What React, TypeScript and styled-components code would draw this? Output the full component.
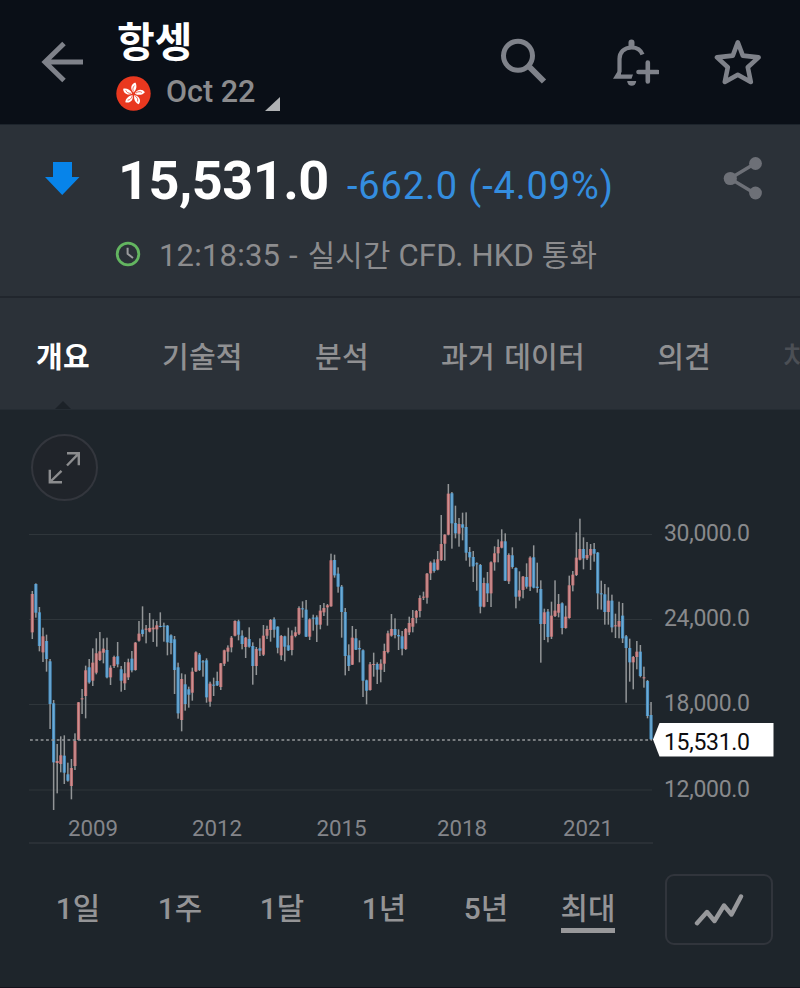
import React from 'react';
import styled, { createGlobalStyle, css } from 'styled-components';

const GlobalStyle = createGlobalStyle`
  * { box-sizing: border-box; }
  body {
    margin: 0;
    background: #1e252b;
    font-family: Roboto, 'Noto Sans CJK KR', sans-serif;
  }
`;

const Screen = styled.div`
  width: 800px;
  height: 988px;
  display: flex;
  flex-direction: column;
  overflow: hidden;
  background: #1e252b;
  border-bottom: 1px solid #14121b;
`;

const Header = styled.header`
  height: 125px;
  flex: none;
  display: flex;
  background: #0a0f17;
  border-bottom: 1px solid #1d242c;
  padding-left: 41px;
`;

const BackIcon = styled.svg`
  width: 43px;
  height: 42px;
  margin-top: 41px;
  flex: none;
`;

const TitleBlock = styled.div`
  margin-left: 32px;
  width: 384px;
  padding-top: 15px;
`;

const Title = styled.h1`
  margin: 0 0 0 1px;
  font-size: 41px;
  line-height: 56px;
  height: 54px;
  font-weight: 700;
  color: #fff;
`;

const Contract = styled.div`
  display: flex;
  height: 45px;
  align-items: center;
  margin-top: 1px;
`;

const Flag = styled.svg`
  width: 35px;
  height: 35px;
  flex: none;
  margin: 2px 15px 0 0;
`;

const Month = styled.span`
  font-size: 30.5px;
  font-weight: 500;
  line-height: 44px;
  height: 46px;
  color: #8b8b8d;
`;

const Corner = styled.svg`
  width: 15px;
  height: 14px;
  margin: 22px 0 0 10px;
`;

const HeaderIcon = styled.svg<{ $gap?: number }>`
  width: 48px;
  height: 48px;
  margin: 38px 0 0 ${(p) => p.$gap ?? 0}px;
  flex: none;
`;

const Quote = styled.section`
  height: 173px;
  flex: none;
  display: flex;
  background: #2b3138;
  border-bottom: 2px solid #21262d;
  padding-left: 44px;
`;

const DownIcon = styled.svg`
  width: 36px;
  height: 34px;
  margin-top: 37px;
  flex: none;
`;

const QuoteBody = styled.div`
  width: 607px;
  margin-left: 36px;
`;

const PriceRow = styled.div`
  display: flex;
  align-items: baseline;
  height: 95px;
  padding-top: 24px;
  line-height: 64px;
  white-space: nowrap;
`;

const Price = styled.span`
  font-size: 54px;
  font-weight: 700;
  letter-spacing: -0.5px;
  color: #fff;
  width: 231px;
  padding-left: 2px;
`;

const Change = styled.span`
  font-size: 38px;
  letter-spacing: 0.85px;
  color: #348ddf;
`;

const StatusRow = styled.div`
  display: flex;
  align-items: center;
  height: 71px;
  white-space: nowrap;
`;

const ClockIcon = styled.svg`
  width: 26px;
  height: 26px;
  margin: -4px 18px 0 -1px;
  flex: none;
`;

const StatusText = styled.span`
  font-size: 31px;
  letter-spacing: 0.2px;
  line-height: 44px;
  color: #8c8c8e;
`;

const Dash = styled.span`
  margin: 0 2px 0 1px;
`;

const Hangul = styled.span`
  font-size: 29.8px;
`;

const ShareIcon = styled.svg`
  width: 40px;
  height: 44px;
  margin-top: 31px;
`;

const Tabs = styled.nav`
  height: 112px;
  flex: none;
  display: flex;
  gap: 72.3px;
  padding: 0 0 0 36px;
  background: #2b3138;
  border-bottom: 1px solid #252c33;
  overflow: hidden;
`;

const Tab = styled.a<{ $active?: boolean; $faded?: boolean }>`
  position: relative;
  height: 112px;
  padding-top: 4px;
  font-size: 29px;
  line-height: 112px;
  letter-spacing: 0.2px;
  word-spacing: 2px;
  font-weight: ${(p) => (p.$active ? 700 : 500)};
  color: ${(p) => (p.$active ? '#fff' : p.$faded ? '#4b4f55' : '#909092')};
  white-space: nowrap;
  ${(p) =>
    p.$active &&
    css`
      &::after {
        content: '';
        position: absolute;
        left: 50%;
        bottom: 0;
        margin-left: -9px;
        border: 9px solid transparent;
        border-top: 0;
        border-bottom-color: #1c2228;
      }
    `}
`;

const ChartArea = styled.section`
  position: relative;
  height: 440px;
  flex: none;
`;

const ChartSvg = styled.svg`
  display: block;
  width: 800px;
  height: 440px;
  font-family: Roboto, sans-serif;
  font-size: 23px;
`;

const ExpandButton = styled.button`
  position: absolute;
  left: 31px;
  top: 24px;
  width: 67px;
  height: 67px;
  padding: 0;
  border-radius: 50%;
  border: 2px solid #33363d;
  background: #20242a;
  display: grid;
  place-items: center;
`;

const Footer = styled.footer`
  flex: 1;
  display: flex;
  padding-left: 27px;
`;

const Ranges = styled.div`
  display: flex;
  width: 612px;
`;

const RangeCell = styled.div`
  flex: 1;
  display: flex;
  justify-content: center;
  align-items: flex-start;
  padding-top: 37px;
`;

const RangeLabel = styled.span<{ $selected?: boolean }>`
  font-size: 29.8px;
  font-weight: 500;
  line-height: 44px;
  height: 46px;
  color: #949496;
  border-bottom: 5px solid ${(p) => (p.$selected ? '#98989a' : 'transparent')};
  white-space: nowrap;
`;

const StyleButton = styled.button`
  width: 108px;
  height: 71px;
  margin: 24px 0 0 26px;
  padding: 0;
  border: 2px solid #31353c;
  border-radius: 9px;
  background: transparent;
  display: grid;
  place-items: center;
`;

type Candle = [dir: 'u' | 'd', high: number, low: number, top: number, bottom: number];

/* Monthly candles in thirds of a pixel, grouped by era with a shared vertical base. */
const SERIES: { base: number; candles: Candle[] }[] = [
  {
    base: 270,
    candles: [
      ['u', 93, 237, 102, 217], ['d', 70, 173, 72, 158], ['d', 141, 274, 157, 258], ['u', 203, 306, 229, 277],
      ['d', 224, 335, 243, 297], ['d', 297, 507, 304, 432], ['d', 420, 750, 430, 607], ['u', 552, 700, 603, 609],
      ['u', 529, 637, 586, 612], ['d', 526, 672, 587, 638], ['d', 608, 665, 643, 662], ['u', 597, 718, 624, 678],
      ['u', 520, 630, 543, 618], ['u', 426, 541, 427, 540], ['u', 387, 462, 415, 418], ['u', 317, 475, 331, 408],
      ['d', 297, 371, 322, 367], ['u', 265, 378, 308, 362], ['u', 235, 343, 280, 338], ['u', 216, 303, 274, 300],
      ['u', 235, 310, 266, 278], ['d', 233, 355, 270, 352], ['u', 316, 375, 323, 352], ['u', 287, 324, 291, 318],
      ['d', 246, 322, 289, 313], ['d', 318, 395, 328, 362], ['u', 306, 390, 340, 370], ['u', 296, 360, 307, 352],
      ['d', 273, 337, 296, 331], ['u', 246, 332, 248, 330], ['u', 183, 245, 221, 242], ['d', 139, 230, 209, 222],
      ['u', 195, 250, 206, 209], ['u', 159, 217, 204, 215], ['u', 178, 246, 203, 208], ['u', 183, 260, 196, 208],
      ['d', 157, 202, 198, 201], ['d', 188, 245, 197, 200], ['d', 195, 286, 197, 247], ['d', 223, 283, 226, 249],
      ['d', 228, 402, 238, 330], ['d', 308, 476, 322, 460], ['u', 340, 514, 357, 480], ['d', 343, 452, 373, 432],
      ['d', 380, 443, 388, 404], ['u', 323, 422, 335, 398], ['u', 274, 336, 277, 334], ['d', 279, 333, 284, 330],
      ['d', 300, 350, 304, 307], ['d', 295, 428, 301, 412], ['u', 365, 440, 371, 425], ['d', 353, 408, 374, 377],
      ['d', 335, 378, 363, 376], ['u', 309, 390, 310, 381], ['u', 269, 318, 271, 311], ['u', 256, 305, 263, 275],
      ['u', 228, 277, 233, 262], ['u', 181, 229, 183, 227], ['d', 179, 241, 184, 224],
    ],
  },
  {
    base: 180,
    candles: [
      ['d', 301, 358, 317, 342], ['u', 321, 384, 323, 351], ['d', 292, 353, 327, 350], ['d', 337, 464, 348, 408],
      ['u', 351, 435, 357, 408], ['d', 325, 378, 355, 362], ['u', 285, 378, 317, 374], ['u', 287, 327, 297, 317],
      ['u', 267, 335, 270, 300], ['d', 262, 323, 268, 299], ['d', 289, 370, 290, 353], ['u', 315, 390, 318, 376],
      ['d', 317, 394, 319, 350], ['d', 293, 363, 346, 361], ['u', 301, 376, 317, 360], ['u', 290, 322, 307, 318],
      ['u', 229, 315, 234, 311], ['d', 214, 263, 235, 238], ['d', 210, 321, 239, 320], ['u', 265, 330, 268, 320],
      ['d', 254, 302, 263, 266], ['d', 256, 336, 262, 284], ['u', 225, 298, 242, 284], ['u', 219, 258, 234, 247],
      ['u', 222, 287, 226, 232], ['u', 71, 230, 91, 229], ['d', 74, 143, 90, 136], ['d', 112, 188, 131, 170],
      ['d', 165, 323, 170, 246], ['d', 234, 436, 246, 378], ['d', 343, 423, 376, 408], ['u', 288, 405, 323, 404],
      ['d', 297, 360, 325, 359], ['d', 331, 397, 354, 358], ['d', 358, 501, 361, 452], ['d', 449, 523, 451, 482],
      ['u', 396, 482, 403, 480], ['u', 368, 440, 402, 405], ['d', 397, 462, 402, 419], ['u', 388, 457, 401, 419],
      ['u', 341, 426, 363, 401], ['u', 302, 370, 310, 366], ['u', 252, 320, 297, 317], ['d', 265, 325, 297, 315],
      ['d', 298, 360, 315, 319], ['d', 303, 376, 319, 356], ['u', 294, 360, 297, 357], ['u', 260, 315, 279, 307],
      ['u', 240, 307, 264, 290], ['u', 240, 280, 243, 263], ['u', 196, 262, 204, 243], ['u', 185, 210, 200, 203],
      ['u', 129, 221, 131, 203], ['u', 94, 150, 98, 130], ['d', 88, 128, 98, 123], ['u', 63, 121, 88, 119],
    ],
  },
  {
    base: 0,
    candles: [
      ['u', 135, 273, 222, 270], ['u', 193, 272, 194, 221], ['u', 42, 196, 71, 194], ['d', 66, 236, 70, 160],
      ['d', 107, 205, 159, 190], ['u', 144, 230, 162, 191], ['d', 128, 211, 163, 173], ['d', 127, 272, 171, 248],
      ['d', 231, 290, 246, 262], ['d', 243, 336, 261, 289], ['d', 277, 362, 280, 283], ['d', 282, 430, 285, 410],
      ['u', 323, 412, 339, 410], ['d', 306, 396, 340, 370], ['u', 274, 411, 277, 370], ['u', 229, 302, 250, 277],
      ['u', 208, 277, 231, 250], ['u', 178, 235, 214, 233], ['d', 190, 333, 214, 332], ['u', 250, 342, 255, 334],
      ['d', 232, 296, 256, 291], ['d', 292, 415, 294, 380], ['u', 304, 392, 361, 380], ['u', 318, 385, 320, 360],
      ['d', 280, 356, 321, 350], ['u', 259, 363, 263, 350], ['d', 226, 355, 262, 353], ['d', 278, 368, 350, 354],
      ['d', 331, 578, 357, 462], ['u', 416, 510, 427, 462], ['d', 417, 517, 425, 501], ['u', 395, 507, 437, 500],
      ['u', 331, 441, 422, 438], ['u', 372, 442, 402, 428], ['d', 397, 493, 400, 474], ['u', 407, 476, 440, 474],
      ['u', 317, 446, 346, 444], ['u', 303, 364, 314, 346], ['u', 187, 318, 263, 315], ['u', 146, 271, 237, 269],
      ['d', 202, 298, 237, 265], ['u', 216, 270, 255, 265], ['u', 222, 300, 237, 256], ['d', 219, 275, 237, 251],
      ['d', 246, 418, 248, 370], ['d', 332, 419, 370, 373], ['d', 342, 464, 373, 426], ['u', 352, 464, 392, 426],
      ['d', 374, 487, 392, 472], ['u', 431, 504, 466, 469], ['u', 395, 505, 453, 470], ['d', 399, 519, 437, 505],
      ['d', 495, 698, 499, 534], ['d', 506, 635, 534, 577], ['u', 558, 658, 561, 577], ['u', 513, 598, 545, 561],
      ['d', 525, 622, 545, 618], ['u', 590, 653, 622, 625], ['d', 630, 745, 633, 738], ['d', 696, 810, 735, 808],
    ],
  },
];

const CANDLES: Candle[] = SERIES.flatMap(({ base, candles }) =>
  candles.map(([dir, ...ys]) => [dir, ...ys.map((y) => 60 + (y + base) / 3)] as Candle)
);

const FIRST_X = 32.3;
const STEP = 3.556;

const PRICES = [
  { label: '30,000.0', y: 124.5 },
  { label: '24,000.0', y: 209.5 },
  { label: '18,000.0', y: 294.5 },
  { label: '12,000.0', y: 380 },
];

const YEARS = [
  { label: '2009', x: 93 },
  { label: '2012', x: 217 },
  { label: '2015', x: 341.5 },
  { label: '2018', x: 462 },
  { label: '2021', x: 588 },
];

function Chart() {
  return (
    <ChartSvg viewBox="0 0 800 440">
      {PRICES.map((p) => (
        <g key={p.label}>
          <line x1="29" x2="652" y1={p.y} y2={p.y} stroke="#2f363b" strokeWidth="1.2" />
          <text x="664" y={p.y + 6.7} fill="#88898c" textLength="86">{p.label}</text>
        </g>
      ))}
      <line x1="29" x2="653" y1="433" y2="433" stroke="#2a3036" strokeWidth="2" />
      {CANDLES.map(([dir, high, low, top, bottom], i) => {
        const x = FIRST_X + i * STEP;
        const body = Math.max(bottom - top, 1);
        return (
          <g key={i}>
            <rect x={x - 0.75} y={high} width="1.5" height={low - high} fill="#929597" />
            <rect x={x - 1.6} y={top} width="3.2" height={body} fill={dir === 'u' ? '#b56a6b' : '#478cbd'} />
            <rect x={x - 0.7} y={top} width="1.4" height={body} fill={dir === 'u' ? '#cd9092' : '#6fabd4'} />
          </g>
        );
      })}
      <line x1="30" x2="652" y1="330" y2="330" stroke="#95989b" strokeWidth="1.4" strokeDasharray="2.8 2.55" />
      <path d="M653 329.5 L659.5 313 H773.5 V346.5 H659.5 Z" fill="#fff" />
      <text x="664" y="340" fill="#0d0d0f" textLength="86">15,531.0</text>
      {YEARS.map((y) => (
        <text key={y.label} x={y.x} y="425.6" fill="#84858a" textAnchor="middle" fontSize="22.3">{y.label}</text>
      ))}
    </ChartSvg>
  );
}

const PETALS = [0, 72, 144, 216, 288];
const TABS = ['개요', '기술적', '분석', '과거 데이터', '의견', '차트'];
const RANGES = ['1일', '1주', '1달', '1년', '5년', '최대'];

export default function App() {
  return (
    <>
      <GlobalStyle />
      <Screen>
        <Header>
          <BackIcon viewBox="0 0 43 42" fill="none" stroke="#7f828a" strokeWidth="5">
            <path d="M42 21H4M23 2.5L4 21l19 18.5" />
          </BackIcon>
          <TitleBlock>
            <Title>항셍</Title>
            <Contract>
              <Flag viewBox="0 0 35 35">
                <circle cx="17.5" cy="17.5" r="17.2" fill="#e9381f" />
                {PETALS.map((a) => (
                  <g key={a} transform={`rotate(${a + 4} 17.5 18)`}>
                    <path d="M17.5 16.5C13.5 14 14 8 18.5 6.5C20.5 9 20.5 13.5 17.5 16.5Z" fill="#fff" />
                    <path d="M17.2 15.5C16 13 16.5 11 18 9.5" stroke="#e9381f" strokeWidth=".7" fill="none" />
                  </g>
                ))}
              </Flag>
              <Month>Oct 22</Month>
              <Corner viewBox="0 0 15 14"><path d="M15 0V14H0Z" fill="#b0b2b4" /></Corner>
            </Contract>
          </TitleBlock>
          <HeaderIcon viewBox="0 0 48 48" fill="none" stroke="#7f828a">
            <circle cx="18" cy="17.8" r="14.5" strokeWidth="5" />
            <path d="M29.5 29L44 43.5" strokeWidth="6" />
          </HeaderIcon>
          <HeaderIcon $gap={63} viewBox="0 0 48 48" fill="none" stroke="#7f828a" strokeWidth="4.2">
            <path d="M31.5 16.5C29.5 11 24.5 9.5 20.5 9.5C13 9.5 8.5 14.5 8.5 21V34.5M20.5 9V4.5" />
            <path d="M20.5 4.5V7" strokeWidth="6" strokeLinecap="round" />
            <path d="M10 33.5L6.5 33.5L2 40.8H20.5L22 36.5H10Z" fill="#7f828a" stroke="none" />
            <path d="M16.2 43H25.2A4.5 4.8 0 0 1 16.2 43Z" fill="#7f828a" stroke="none" />
            <path d="M36.8 24.5V43.5M27.5 34H46.5" strokeWidth="4.6" strokeLinecap="round" />
          </HeaderIcon>
          <HeaderIcon $gap={55} viewBox="0 0 48 48" fill="none" stroke="#7f828a" strokeWidth="4.6" strokeLinejoin="round">
            <path d="M23.8 4.3L28.8 17.6L44.6 19.4L33.8 29.3L36.8 43.9L23.8 36.7L10.8 43.9L13.8 29.3L3 19.4L18.8 17.6Z" />
          </HeaderIcon>
        </Header>

        <Quote>
          <DownIcon viewBox="0 0 36 34"><path d="M9 0H28V15H35.5L18.2 33L1 15H9Z" fill="#0784ea" /></DownIcon>
          <QuoteBody>
            <PriceRow>
              <Price>15,531.0</Price>
              <Change>-662.0 (-4.09%)</Change>
            </PriceRow>
            <StatusRow>
              <ClockIcon viewBox="0 0 26 26" fill="none">
                <circle cx="13" cy="13" r="10.8" stroke="#63b560" strokeWidth="2.8" />
                <path d="M12.6 6.8V12.8L18 17" stroke="#9a9b9d" strokeWidth="2" />
              </ClockIcon>
              <StatusText>
                12:18:35 <Dash>-</Dash> <Hangul>실시간</Hangul> CFD. HKD <Hangul>통화</Hangul>
              </StatusText>
            </StatusRow>
          </QuoteBody>
          <ShareIcon viewBox="0 0 40 44" fill="#6d7077">
            <path d="M32 7.5L7 22.5L32 37.5" fill="none" stroke="#6d7077" strokeWidth="3.4" />
            <circle cx="32.5" cy="7.5" r="6.4" />
            <circle cx="7.3" cy="22.5" r="6.6" />
            <circle cx="32.5" cy="37" r="6.4" />
          </ShareIcon>
        </Quote>

        <Tabs>
          {TABS.map((t, i) => (
            <Tab key={t} $active={i === 0} $faded={i === TABS.length - 1}>{t}</Tab>
          ))}
        </Tabs>

        <ChartArea>
          <Chart />
          <ExpandButton aria-label="expand">
            <svg width="33" height="33" viewBox="0 0 33 33" fill="none" stroke="#8c8d8f" strokeWidth="2.4">
              <path d="M19 2.3H30.8V14.3M30.5 2.6L19 14.5M1.8 18.8V31.2H14M2 31L13.5 19.8" />
            </svg>
          </ExpandButton>
        </ChartArea>

        <Footer>
          <Ranges>
            {RANGES.map((r) => (
              <RangeCell key={r}>
                <RangeLabel $selected={r === '최대'}>{r}</RangeLabel>
              </RangeCell>
            ))}
          </Ranges>
          <StyleButton aria-label="line chart">
            <svg width="50" height="32" viewBox="0 0 50 32" fill="none" stroke="#97989b" strokeWidth="4.4" strokeLinecap="round" strokeLinejoin="round">
              <path d="M3 29.2L13 18L20.5 27L30 11.5L37.5 20.5L47 2.5" />
            </svg>
          </StyleButton>
        </Footer>
      </Screen>
    </>
  );
}
